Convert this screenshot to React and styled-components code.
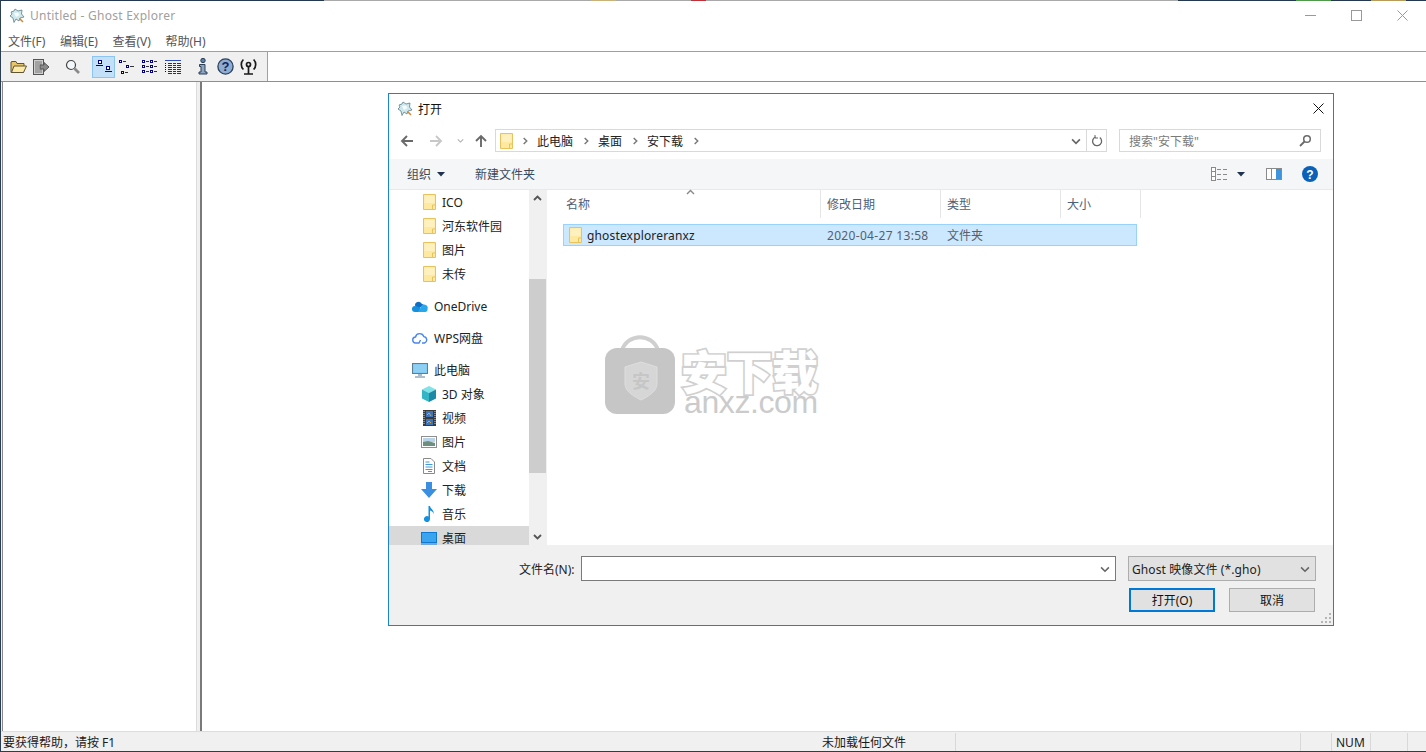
import React from "react";
import styled, { createGlobalStyle } from "styled-components";

const UI_FONT = `"Noto Sans", "Noto Sans CJK SC", sans-serif`;

const GlobalStyle = createGlobalStyle`
  html, body {
    margin: 0;
    padding: 0;
    height: 100%;
    overflow: hidden;
    background: #fff;
  }
  #root { height: 100%; }
  * { box-sizing: border-box; }
`;

/*============= Main window ================*/
const Window = styled.div`
  position: relative;
  width: 1426px;
  height: 752px;
  display: flex;
  flex-direction: column;
  background: #fff;
  border-left: 1px solid #2b3d50;
  border-bottom: 1px solid #2b3d50;
  font-family: ${UI_FONT};
  font-size: 12px;
  color: #1a1a1a;
  overflow: hidden;
`;

/* the desktop peeking out above the maximised window */
const DesktopEdge = styled.div`
  height: 1px;
  flex: none;
  background: linear-gradient(
    to right,
    #24394f 0 323px,
    #a9a9a9 323px 590px,
    #c9b27a 590px 615px,
    #a9a9a9 615px 690px,
    #c0303a 690px 705px,
    #a9a9a9 705px 1177px,
    #24394f 1177px 1295px,
    #4f9a4a 1295px 1330px,
    #24394f 1330px 1370px,
    #b89a5a 1370px 1405px,
    #24394f 1405px
  );
`;

const TitleBar = styled.div`
  height: 29px;
  flex: none;
  display: flex;
  align-items: center;
  padding-left: 8px;
  gap: 5px;
`;

const TitleText = styled.span`
  font-size: 12px;
  letter-spacing: 0.25px;
  color: #a0a0a0;
`;

const WindowButtons = styled.div`
  margin-left: auto;
  margin-right: 1px;
  display: flex;
  height: 29px;
`;

const WindowButton = styled.div`
  width: 46px;
  height: 29px;
  display: flex;
  align-items: center;
  justify-content: center;
`;

const MenuBar = styled.div`
  height: 22px;
  flex: none;
  display: flex;
  align-items: center;
  padding: 1px 0 0 7px;
  gap: 14.6px;
  border-bottom: 1px solid #a0a0a0;
`;

const MenuItem = styled.span`
  font-size: 12px;
  color: #555;
`;

const ToolbarRow = styled.div`
  height: 30px;
  flex: none;
  display: flex;
  border-bottom: 1px solid #8f8f8f;
`;

const Toolbar = styled.div`
  width: 267px;
  display: flex;
  align-items: center;
  padding-left: 6px;
  background: #f0f0f0;
  border-right: 1px solid #a0a0a0;
`;

const ToolButton = styled.div`
  width: 23px;
  height: 22px;
  flex: none;
  display: flex;
  align-items: center;
  justify-content: center;
  margin-right: ${(p) => p.$gap || 0}px;
  background: ${(p) => (p.$active ? "#c4e0f8" : "transparent")};
  border: 1px solid ${(p) => (p.$active ? "#8cc4f2" : "transparent")};
`;

const Panes = styled.div`
  flex: 1;
  min-height: 0;
  display: flex;
  background: #f0f0f0;
`;

const LeftPane = styled.div`
  width: 195px;
  margin-left: 1px;
  flex: none;
  background: #fff;
  border-left: 1px solid #8a8a8a;
  border-right: 1px solid #dcdcdc;
`;

const RightPane = styled.div`
  flex: 1;
  margin-left: 3px;
  background: #fff;
  border-left: 2px solid #7a7a7a;
`;

const StatusBar = styled.div`
  height: 20px;
  flex: none;
  display: flex;
  align-items: center;
  padding-top: 1px;
  background: #f0f0f0;
  border-top: 1px solid #dcdcdc;
`;

const StatusCell = styled.div`
  height: 100%;
  width: ${(p) => (p.$w ? `${p.$w}px` : "auto")};
  flex: ${(p) => (p.$w ? "none" : "1")};
  display: flex;
  align-items: center;
  padding-left: ${(p) => p.$pad ?? 2}px;
  border-left: ${(p) => (p.$sep ? "1px solid #d8d8d8" : "none")};
  white-space: nowrap;
`;

/*============= Open dialog ================*/
const Dialog = styled.div`
  position: absolute;
  left: 387px;
  top: 93px;
  width: 946px;
  height: 533px;
  display: flex;
  flex-direction: column;
  background: #fff;
  border: 1px solid #1883d7;
`;

const DialogTitle = styled.div`
  height: 29px;
  flex: none;
  display: flex;
  align-items: center;
  padding-left: 8px;
  gap: 5px;
  color: #111;
`;

const DialogClose = styled.div`
  margin-left: auto;
  width: 30px;
  display: flex;
  justify-content: center;
`;

const NavRow = styled.div`
  height: 36px;
  flex: none;
  display: flex;
  align-items: center;
  padding: 0 0 1px 7px;
`;

const NavArrow = styled.div`
  width: ${(p) => p.$w}px;
  height: 21px;
  flex: none;
  display: flex;
  align-items: center;
  justify-content: center;
`;

const AddressBar = styled.div`
  width: 612px;
  height: 23px;
  flex: none;
  display: flex;
  align-items: center;
  border: 1px solid #d9d9d9;
  padding-left: 4px;
`;

const Crumb = styled.span`
  color: #222;
  margin: 0 1px;
`;

const AddressEnd = styled.div`
  margin-left: auto;
  height: 100%;
  display: flex;
  align-items: center;
`;

const RefreshBox = styled.div`
  width: 20px;
  height: 100%;
  margin-left: 5px;
  display: flex;
  align-items: center;
  justify-content: center;
  border-left: 1px solid #d9d9d9;
`;

const SearchBox = styled.div`
  width: 202px;
  height: 23px;
  margin-left: 12px;
  flex: none;
  display: flex;
  align-items: center;
  justify-content: space-between;
  padding: 0 8px 0 9px;
  border: 1px solid #d9d9d9;
  color: #7a7a7a;
`;

const CommandBar = styled.div`
  height: 31px;
  flex: none;
  display: flex;
  align-items: center;
  padding: 0 15px 0 18px;
  background: #f5f6f7;
  border-bottom: 1px solid #e8e9ea;
  color: #3c4a5a;
`;

const CommandItem = styled.span`
  display: flex;
  align-items: center;
  gap: 6px;
  margin-right: 30px;
`;

const CommandTools = styled.div`
  margin-left: auto;
  display: flex;
  align-items: center;
`;

const CommandSlot = styled.span`
  display: flex;
  margin: 0 ${(p) => p.$right || 0}px 0 ${(p) => p.$left || 0}px;
`;

const Body = styled.div`
  height: 355px;
  flex: none;
  display: flex;
`;

const NavPane = styled.div`
  width: 140px;
  flex: none;
  overflow: hidden;
`;

const NavItem = styled.div`
  height: 24px;
  margin-top: ${(p) => p.$top || 0}px;
  display: flex;
  align-items: center;
  gap: ${(p) => (p.$root ? 6 : 5)}px;
  padding-left: ${(p) => (p.$root ? 23 : 32)}px;
  background: ${(p) => (p.$selected ? "#d9d9d9" : "transparent")};
  color: #222;
  white-space: nowrap;
`;

const NavIcon = styled.span`
  width: 16px;
  height: 18px;
  flex: none;
  display: flex;
  align-items: center;
  justify-content: center;
`;

const ScrollBar = styled.div`
  width: 17px;
  flex: none;
  display: flex;
  flex-direction: column;
  background: #f0f0f0;
`;

const ScrollButton = styled.div`
  height: 17px;
  flex: none;
  display: flex;
  align-items: center;
  justify-content: center;
`;

const ScrollTrack = styled.div`
  flex: 1;
  display: flex;
  flex-direction: column;
`;

const ScrollGap = styled.div`
  height: ${(p) => p.$h}px;
  flex: none;
  background: ${(p) => (p.$thumb ? "#cdcdcd" : "transparent")};
`;

const FileArea = styled.div`
  flex: 1;
  min-width: 0;
  padding-left: 16px;
  border-left: 1px solid #f0f0f0;
  background: #fff;
`;

const ColumnHeader = styled.div`
  position: relative;
  height: 28px;
  display: flex;
  color: #4c607a;
`;

const Column = styled.div`
  width: ${(p) => p.$w}px;
  height: 100%;
  flex: none;
  display: flex;
  align-items: center;
  padding-left: ${(p) => p.$pad || 6}px;
  border-right: 1px solid #e5e5e5;
`;

const SortCaret = styled.span`
  position: absolute;
  left: 123px;
  top: -2px;
  line-height: 0;
`;

const FileRow = styled.div`
  width: 574px;
  height: 22px;
  margin-top: 6px;
  display: flex;
  align-items: center;
  background: #cce8ff;
  border: 1px solid #99d1ff;
  color: #222;
`;

const FileCell = styled.div`
  width: ${(p) => p.$w}px;
  flex: none;
  display: flex;
  align-items: center;
  gap: 5px;
  padding-left: ${(p) => p.$pad || 0}px;
  color: ${(p) => (p.$muted ? "#55606c" : "#222")};
  letter-spacing: ${(p) => p.$track || 0}px;
  white-space: nowrap;
`;

const Footer = styled.div`
  flex: 1;
  position: relative;
  display: flex;
  flex-direction: column;
  background: #f0f0f0;
  padding: 11px 17px 0 130px;
`;

const FooterRow = styled.div`
  display: flex;
  align-items: center;
`;

const FileNameLabel = styled.span`
  color: #222;
  margin-right: 4px;
  width: 58px;
  white-space: nowrap;
`;

const FileNameInput = styled.div`
  width: 535px;
  height: 25px;
  display: flex;
  align-items: center;
  justify-content: flex-end;
  padding-right: 5px;
  background: #fff;
  border: 1px solid #7a7a7a;
`;

const TypeSelect = styled.div`
  width: 188px;
  height: 25px;
  margin-left: 12px;
  display: flex;
  align-items: center;
  justify-content: space-between;
  padding: 0 5px 0 3px;
  background: #e1e1e1;
  border: 1px solid #adadad;
  color: #222;
  letter-spacing: 0.1px;
`;

const ButtonRow = styled.div`
  display: flex;
  justify-content: flex-end;
  gap: 14px;
  margin-top: 7px;
  padding-right: 1px;
`;

const DialogButton = styled.div`
  width: 86px;
  height: 24px;
  display: flex;
  align-items: center;
  justify-content: center;
  background: #e1e1e1;
  border: ${(p) => (p.$primary ? "2px solid #0078d7" : "1px solid #adadad")};
  color: #111;
`;

const Grip = styled.svg`
  position: absolute;
  right: 1px;
  bottom: 1px;
`;

/*============= Watermark ================*/
const Watermark = styled.div`
  position: absolute;
  left: 603px;
  top: 334px;
  display: flex;
  gap: 8px;
  pointer-events: none;
`;

const WatermarkText = styled.div`
  display: flex;
  flex-direction: column;
  padding-top: 15px;
`;

const WatermarkCjk = styled.span`
  font-family: "Noto Sans CJK SC", sans-serif;
  font-weight: 900;
  font-size: 46px;
  line-height: 41px;
  height: 41px;
  margin-left: -3px;
  letter-spacing: -0.5px;
  color: #fff;
  -webkit-text-stroke: 3.4px #d0d0d0;
  paint-order: stroke fill;
`;

const WatermarkLatin = styled.span`
  font-family: "Liberation Sans", sans-serif;
  font-size: 32px;
  line-height: 24px;
  letter-spacing: -0.4px;
  color: #cbcbcb;
`;

/*============= Icons ================*/
const GhostIcon = () => (
  <svg width="16" height="16" viewBox="0 0 16 16">
    <path d="M2 4 L5 3 L6 1 L9 3 L13 2 L12.5 6 L15 9 L11 10 L10 13 L7 11 L5 14.5 L4 10 L1 8 L3 6 Z" fill="#cfe8ee" stroke="#5f7f88" strokeWidth="0.8" strokeLinejoin="round" />
    <path d="M5 5 L9 4.5 L10.5 7 L7 9 Z" fill="#f6fcfd" />
    <path d="M10.5 10.5 L14 14" stroke="#d08a3c" strokeWidth="1.6" />
  </svg>
);

const OpenFolderIcon = () => (
  <svg width="17" height="15" viewBox="0 0 17 15">
    <path d="M1 3 V13.5 H13.5 L14 6 V4.5 H7 L6 2.5 H2 Z" fill="#e8c56a" stroke="#5e5436" />
    <path d="M1.5 13.5 L4 7 H16.5 L13.5 13.5 Z" fill="#fbe9a5" stroke="#5e5436" />
  </svg>
);

const ExportIcon = () => (
  <svg width="17" height="16" viewBox="0 0 17 16">
    <rect x="0.5" y="0.5" width="10" height="15" fill="#cfcfcf" stroke="#555" />
    <path d="M2 3h7M2 5h7M2 7h4M2 9h4M2 11h7M2 13h7" stroke="#777" />
    <path d="M7 6 H11 V3.5 L16 8 L11 12.5 V10 H7 Z" fill="#8a8a8a" stroke="#555" />
  </svg>
);

const MagnifierIcon = () => (
  <svg width="16" height="16" viewBox="0 0 16 16">
    <circle cx="6" cy="6" r="4.5" fill="#f4f8fb" stroke="#444" strokeWidth="1.2" />
    <path d="M9.5 9.5 L14 14" stroke="#8a8a8a" strokeWidth="2.6" />
  </svg>
);

const BLUE = "#000080";

const LargeIconsIcon = () => (
  <svg width="16" height="14" viewBox="0 0 16 14" shapeRendering="crispEdges">
    <path d="M2.5 .5h3v3h-3zM10.5 6.5h3v3h-3z" fill="#fff" stroke={BLUE} />
    <path d="M0 5.5h7M9 11.5h7" stroke={BLUE} />
  </svg>
);

const SmallIconsIcon = () => (
  <svg width="15" height="14" viewBox="0 0 15 14" shapeRendering="crispEdges">
    <path d="M0.5 0.5h2v2h-2zM7.5 5.5h2v2h-2zM2.5 11.5h2v2h-2z" fill="#fff" stroke={BLUE} />
    <path d="M4 1.5h3M11 6.5h4M6 12.5h3" stroke="#333" />
  </svg>
);

const ListIcon = () => (
  <svg width="16" height="14" viewBox="0 0 16 14" shapeRendering="crispEdges">
    <path d="M0.5 .5h2v2h-2zM8.5 .5h2v2h-2zM0.5 5.5h2v2h-2zM8.5 5.5h2v2h-2zM0.5 10.5h2v2h-2zM8.5 10.5h2v2h-2z" fill="#fff" stroke={BLUE} />
    <path d="M4 1.5h3M12 1.5h3M4 6.5h3M12 6.5h3M4 11.5h3M12 11.5h3" stroke="#333" />
  </svg>
);

const DetailsIcon = () => (
  <svg width="16" height="14" viewBox="0 0 16 14" shapeRendering="crispEdges">
    <path d="M0 .5h16" stroke="#2f4fb8" />
    <path d="M.5 3v10" stroke={BLUE} strokeDasharray="1 1" />
    <path d="M3 3.5h13M3 5.5h13M3 7.5h13M3 9.5h13M3 11.5h13M3 13.5h13" stroke="#333" />
    <path d="M7.5 3v11M11.5 3v11" stroke="#f0f0f0" />
  </svg>
);

const InfoIcon = () => (
  <svg width="10" height="17" viewBox="0 0 10 17">
    <circle cx="5" cy="2.5" r="2.2" fill="#5a7fa8" stroke="#2c3e55" />
    <path d="M1.5 6.5 H7 V14 H9 V16 H1 V14 H3 V8.5 H1.5 Z" fill="#8ba6c4" stroke="#2c3e55" />
  </svg>
);

const HelpIcon = () => (
  <svg width="17" height="17" viewBox="0 0 17 17">
    <circle cx="8.5" cy="8.5" r="7.6" fill="#8fadd0" stroke="#2d3f5c" strokeWidth="1.3" />
    <text x="8.5" y="13" textAnchor="middle" fontFamily="Liberation Sans" fontWeight="700" fontSize="13" fill="#14245c">?</text>
  </svg>
);

const AntennaIcon = () => (
  <svg width="17" height="17" viewBox="0 0 17 17" fill="none" stroke="#1a1a1a" strokeWidth="1.7">
    <circle cx="8.5" cy="6.5" r="2" />
    <path d="M3.4 11.5 A7 7 0 0 1 3.4 1.5 M13.6 1.5 A7 7 0 0 1 13.6 11.5" />
    <path d="M8.5 8.5 V15.5 M4 16 H13" />
  </svg>
);

const FolderIcon = () => (
  <svg width="13" height="16" viewBox="0 0 13 16">
    <path d="M.5 .5 H12.5 V15.5 H.5 Z" fill="#ffe9a0" stroke="#e7c35e" />
    <path d="M1.5 1.5 H11.5 V9 H1.5 Z" fill="#fff0c0" />
    <path d="M9.5 11 H12 M9.5 11 V15" stroke="#e7c35e" />
  </svg>
);

const OneDriveIcon = () => (
  <svg width="16" height="11" viewBox="0 0 16 11">
    <path d="M3 4.5 A3.5 3.5 0 0 1 9.5 2.5 L12 4 L6 8 Z" fill="#0f6fc6" />
    <path d="M3 11 A2.7 2.7 0 0 1 3 5 C5 5 7 6 8 7 L10 11 Z" fill="#1490df" />
    <path d="M6 11 L9 6 A3 3 0 0 1 15.5 8 A2.6 2.6 0 0 1 13.5 11 Z" fill="#28a8ea" />
  </svg>
);

const WpsIcon = () => (
  <svg width="16" height="13" viewBox="0 0 16 13" fill="none" stroke="#4a86ee" strokeWidth="1.4">
    <path d="M4 11 A3 3 0 0 1 3.5 5 A4.3 4.3 0 0 1 11.8 4.6 A3.3 3.3 0 0 1 12.5 11 H10" />
    <path d="M4 11 H7 L8.5 8" />
  </svg>
);

const PcIcon = () => (
  <svg width="16" height="15" viewBox="0 0 16 15">
    <rect x=".5" y=".5" width="15" height="10" fill="#7cc4ee" stroke="#5a7f9a" />
    <rect x="1.5" y="1.5" width="13" height="8" fill="#8ed0f4" />
    <path d="M6 11h4v2H6z" fill="#a8bccb" />
    <path d="M3 14h10" stroke="#8ba2b4" strokeWidth="1.4" />
  </svg>
);

const CubeIcon = () => (
  <svg width="16" height="16" viewBox="0 0 16 16">
    <path d="M8 0 L15 3.5 L8 7 L1 3.5 Z" fill="#7fe3e8" />
    <path d="M1 3.5 L8 7 V16 L1 12.5 Z" fill="#34b5c6" />
    <path d="M15 3.5 L8 7 V16 L15 12.5 Z" fill="#1c8aa6" />
  </svg>
);

const VideoIcon = () => (
  <svg width="13" height="16" viewBox="0 0 13 16">
    <rect width="13" height="16" fill="#3a3a3a" />
    <path d="M1 1v14M12 1v14" stroke="#d8d8d8" strokeDasharray="1 1" />
    <rect x="3" y="1" width="7" height="6" fill="#3f74b8" />
    <rect x="3" y="9" width="7" height="6" fill="#3f74b8" />
    <path d="M4 5l2-2 2 3M4 13l2-2 2 2" stroke="#e0a43a" fill="none" />
  </svg>
);

const PictureIcon = () => (
  <svg width="16" height="12" viewBox="0 0 16 12">
    <rect x=".5" y=".5" width="15" height="11" fill="#fff" stroke="#8f8f8f" />
    <rect x="2" y="2" width="12" height="4" fill="#b9d4e8" />
    <path d="M2 6 L7 5 L14 7 V10 H2 Z" fill="#6d8f80" />
  </svg>
);

const DocIcon = () => (
  <svg width="12" height="16" viewBox="0 0 12 16">
    <path d="M.5 .5 H8 L11.5 4 V15.5 H.5 Z" fill="#fff" stroke="#8a8a8a" />
    <path d="M2.5 4h4M2.5 6.5h7M2.5 9h7M2.5 11.5h7M5 13.5h4" stroke="#3f9ad8" />
  </svg>
);

const DownloadIcon = () => (
  <svg width="16" height="16" viewBox="0 0 16 16">
    <path d="M5 0 H11 V7 H16 L8 16 L0 7 H5 Z" fill="#3a8fe0" />
  </svg>
);

const MusicIcon = () => (
  <svg width="11" height="16" viewBox="0 0 11 16">
    <path d="M4.5 0 H6 C6.5 3 10.5 4 9.5 8 C9 5.5 7.5 5 6 4.5 V13 A3 3 0 1 1 4.5 10.5 Z" fill="#1490df" />
  </svg>
);

const DesktopIcon = () => (
  <svg width="16" height="13" viewBox="0 0 16 13">
    <rect width="16" height="11" fill="#0f78d4" />
    <rect x="1" y="1" width="14" height="9" fill="#3aa5ee" />
    <path d="M0 12h16" stroke="#0f78d4" />
  </svg>
);

const Chevron = ({ dir = "down", color = "#666", size = 9, weight = 1.4 }) => {
  const d = {
    down: "M1 3 L4.5 6.5 L8 3",
    up: "M1 6 L4.5 2.5 L8 6",
    right: "M3 1 L6.5 4.5 L3 8",
  }[dir];
  return (
    <svg width={size} height={size} viewBox="0 0 9 9" fill="none" stroke={color} strokeWidth={weight}>
      <path d={d} />
    </svg>
  );
};

const ArrowSvg = styled.svg`
  transform: rotate(${(p) => p.$turn}deg);
`;

const ArrowIcon = ({ dir = "left", color = "#6a6a6a" }) => {
  const turn = { left: 0, right: 180, up: 90 }[dir];
  return (
    <ArrowSvg $turn={turn} width="14" height="14" viewBox="0 0 14 14" fill="none" stroke={color} strokeWidth="1.9">
      <path d="M13 7 H2 M7 2 L2 7 L7 12" />
    </ArrowSvg>
  );
};

const Triangle = () => (
  <svg width="8" height="5" viewBox="0 0 8 5">
    <path d="M0 0 H8 L4 4.5 Z" fill="#1f3350" />
  </svg>
);

const Refresh = () => (
  <svg width="12" height="12" viewBox="0 0 12 12" fill="none" stroke="#666" strokeWidth="1.3">
    <path d="M4.5 2 A4.5 4.5 0 1 0 8.8 2.6" />
    <path d="M4 0 V3 H7" strokeWidth="1" />
  </svg>
);

const SearchIcon = () => (
  <svg width="13" height="13" viewBox="0 0 13 13" fill="none" stroke="#6a6a6a">
    <circle cx="8" cy="5" r="3.3" strokeWidth="1.5" />
    <path d="M5.5 7.5 L1 12" strokeWidth="1.8" />
  </svg>
);

const ViewsIcon = () => (
  <svg width="16" height="14" viewBox="0 0 16 14" shapeRendering="crispEdges">
    <rect x=".5" y=".5" width="4" height="13" fill="#fff" stroke="#8a8a8a" />
    <path d="M1 4.5h3M1 9.5h3" stroke="#8a8a8a" />
    <path d="M6 2.5h4M12 2.5h4M6 7.5h4M12 7.5h4M6 12.5h4M12 12.5h4" stroke="#8a8a8a" />
  </svg>
);

const PreviewIcon = () => (
  <svg width="16" height="12" viewBox="0 0 16 12" shapeRendering="crispEdges">
    <rect x=".5" y=".5" width="15" height="11" fill="#fff" stroke="#8a8a8a" />
    <rect x="10" y="1" width="5" height="10" fill="#3f93dd" />
    <path d="M5.5 1v10" stroke="#8a8a8a" />
  </svg>
);

const BlueHelp = () => (
  <svg width="16" height="16" viewBox="0 0 16 16">
    <circle cx="8" cy="8" r="8" fill="#0a62b8" />
    <text x="8" y="12.5" textAnchor="middle" fontFamily="Liberation Sans" fontWeight="700" fontSize="12" fill="#fff">?</text>
  </svg>
);

const CloseGlyph = ({ color = "#111" }) => (
  <svg width="11" height="11" viewBox="0 0 11 11" stroke={color} fill="none">
    <path d="M.5 .5 L10.5 10.5 M10.5 .5 L.5 10.5" />
  </svg>
);

const WatermarkBag = () => (
  <svg width="72" height="81" viewBox="0 0 72 81">
    <path d="M18 16 C24 -1 48 -1 54 16" fill="none" stroke="#cfcfcf" strokeWidth="4" />
    <rect x="1" y="14" width="70" height="66" rx="12" fill="#c6c6c6" />
    <path d="M21 33 L37 28 L53 33 V50 C53 57 45 62 37 66 C29 62 21 57 21 50 Z" fill="#d6d6d6" stroke="#dedede" />
    <text x="37" y="54" textAnchor="middle" fontFamily="Noto Sans CJK SC" fontSize="18" fontWeight="700" fill="#c6c6c6">安</text>
  </svg>
);

/*============= Data ================*/
const menus = ["文件(F)", "编辑(E)", "查看(V)", "帮助(H)"];

const navItems = [
  { label: "ICO", icon: <FolderIcon /> },
  { label: "河东软件园", icon: <FolderIcon /> },
  { label: "图片", icon: <FolderIcon /> },
  { label: "未传", icon: <FolderIcon /> },
  { label: "OneDrive", icon: <OneDriveIcon />, root: true, top: 8 },
  { label: "WPS网盘", icon: <WpsIcon />, root: true, top: 8 },
  { label: "此电脑", icon: <PcIcon />, root: true, top: 8 },
  { label: "3D 对象", icon: <CubeIcon /> },
  { label: "视频", icon: <VideoIcon /> },
  { label: "图片", icon: <PictureIcon /> },
  { label: "文档", icon: <DocIcon /> },
  { label: "下载", icon: <DownloadIcon /> },
  { label: "音乐", icon: <MusicIcon /> },
  { label: "桌面", icon: <DesktopIcon />, selected: true },
];

const columns = [
  { label: "名称", w: 258, pad: 3 },
  { label: "修改日期", w: 120 },
  { label: "类型", w: 120 },
  { label: "大小", w: 80 },
];

const CrumbArrow = () => (
  <NavArrow $w={23}>
    <Chevron dir="right" color="#777" size={8} weight={1.6} />
  </NavArrow>
);

const App = () => {
  return (
    <>
      <GlobalStyle />
      <Window>
        <DesktopEdge />
        <TitleBar>
          <GhostIcon />
          <TitleText>Untitled - Ghost Explorer</TitleText>
          <WindowButtons>
            <WindowButton>
              <svg width="11" height="1"><path d="M0 .5h11" stroke="#999" /></svg>
            </WindowButton>
            <WindowButton>
              <svg width="11" height="11"><rect x=".5" y=".5" width="10" height="10" fill="none" stroke="#999" /></svg>
            </WindowButton>
            <WindowButton>
              <CloseGlyph color="#999" />
            </WindowButton>
          </WindowButtons>
        </TitleBar>
        <MenuBar>
          {menus.map((m) => (
            <MenuItem key={m}>{m}</MenuItem>
          ))}
        </MenuBar>
        <ToolbarRow>
          <Toolbar>
            <ToolButton><OpenFolderIcon /></ToolButton>
            <ToolButton $gap={8}><ExportIcon /></ToolButton>
            <ToolButton $gap={8}><MagnifierIcon /></ToolButton>
            <ToolButton $active><LargeIconsIcon /></ToolButton>
            <ToolButton><SmallIconsIcon /></ToolButton>
            <ToolButton><ListIcon /></ToolButton>
            <ToolButton $gap={7}><DetailsIcon /></ToolButton>
            <ToolButton><InfoIcon /></ToolButton>
            <ToolButton><HelpIcon /></ToolButton>
            <ToolButton><AntennaIcon /></ToolButton>
          </Toolbar>
        </ToolbarRow>
        <Panes>
          <LeftPane />
          <RightPane />
        </Panes>
        <StatusBar>
          <StatusCell $w={821}>要获得帮助，请按 F1</StatusCell>
          <StatusCell $w={133} $pad={0}>未加载任何文件</StatusCell>
          <StatusCell $sep />
          <StatusCell $w={31} $sep />
          <StatusCell $w={39} $sep $pad={4}>NUM</StatusCell>
          <StatusCell $w={37} $sep />
          <StatusCell $w={19} $sep />
        </StatusBar>

        <Dialog>
          <DialogTitle>
            <GhostIcon />
            <span>打开</span>
            <DialogClose><CloseGlyph /></DialogClose>
          </DialogTitle>
          <NavRow>
            <NavArrow $w={22}><ArrowIcon /></NavArrow>
            <NavArrow $w={36}><ArrowIcon dir="right" color="#c8c8c8" /></NavArrow>
            <NavArrow $w={12}><Chevron color="#b0b0b0" size={7} /></NavArrow>
            <NavArrow $w={29}><ArrowIcon dir="up" /></NavArrow>
            <AddressBar>
              <FolderIcon />
              <CrumbArrow />
              <Crumb>此电脑</Crumb>
              <CrumbArrow />
              <Crumb>桌面</Crumb>
              <CrumbArrow />
              <Crumb>安下载</Crumb>
              <CrumbArrow />
              <AddressEnd>
                <Chevron color="#666" size={10} weight={1.5} />
                <RefreshBox><Refresh /></RefreshBox>
              </AddressEnd>
            </AddressBar>
            <SearchBox>
              <span>搜索"安下载"</span>
              <SearchIcon />
            </SearchBox>
          </NavRow>
          <CommandBar>
            <CommandItem>组织 <Triangle /></CommandItem>
            <CommandItem>新建文件夹</CommandItem>
            <CommandTools>
              <ViewsIcon />
              <CommandSlot $left={10} $right={21}><Triangle /></CommandSlot>
              <PreviewIcon />
              <CommandSlot $left={20}><BlueHelp /></CommandSlot>
            </CommandTools>
          </CommandBar>
          <Body>
            <NavPane>
              {navItems.map((item, i) => (
                <NavItem key={i} $root={item.root} $top={item.top} $selected={item.selected}>
                  <NavIcon>{item.icon}</NavIcon>
                  <span>{item.label}</span>
                </NavItem>
              ))}
            </NavPane>
            <ScrollBar>
              <ScrollButton><Chevron dir="up" color="#555" weight={1.8} /></ScrollButton>
              <ScrollTrack>
                <ScrollGap $h={72} />
                <ScrollGap $h={194} $thumb />
              </ScrollTrack>
              <ScrollButton><Chevron color="#555" weight={1.8} /></ScrollButton>
            </ScrollBar>
            <FileArea>
              <ColumnHeader>
                <SortCaret><Chevron dir="up" color="#888" size={9} /></SortCaret>
                {columns.map((c) => (
                  <Column key={c.label} $w={c.w} $pad={c.pad}>{c.label}</Column>
                ))}
              </ColumnHeader>
              <FileRow>
                <FileCell $w={263} $pad={5} $track={0.16}>
                  <FolderIcon />
                  <span>ghostexploreranxz</span>
                </FileCell>
                <FileCell $w={120} $muted $track={0.32}>2020-04-27 13:58</FileCell>
                <FileCell $w={120} $muted>文件夹</FileCell>
              </FileRow>
            </FileArea>
          </Body>
          <Footer>
            <FooterRow>
              <FileNameLabel>文件名(N):</FileNameLabel>
              <FileNameInput><Chevron size={10} /></FileNameInput>
              <TypeSelect>
                <span>Ghost 映像文件 (*.gho)</span>
                <Chevron size={10} />
              </TypeSelect>
            </FooterRow>
            <ButtonRow>
              <DialogButton $primary>打开(O)</DialogButton>
              <DialogButton>取消</DialogButton>
            </ButtonRow>
            <Grip width="11" height="11" viewBox="0 0 11 11" fill="#b5b5b5">
              <path d="M8 0h2v2H8zM4 4h2v2H4zM8 4h2v2H8zM0 8h2v2H0zM4 8h2v2H4zM8 8h2v2H8z" />
            </Grip>
          </Footer>
        </Dialog>

        <Watermark>
          <WatermarkBag />
          <WatermarkText>
            <WatermarkCjk>安下载</WatermarkCjk>
            <WatermarkLatin>anxz.com</WatermarkLatin>
          </WatermarkText>
        </Watermark>
      </Window>
    </>
  );
};

export default App;
